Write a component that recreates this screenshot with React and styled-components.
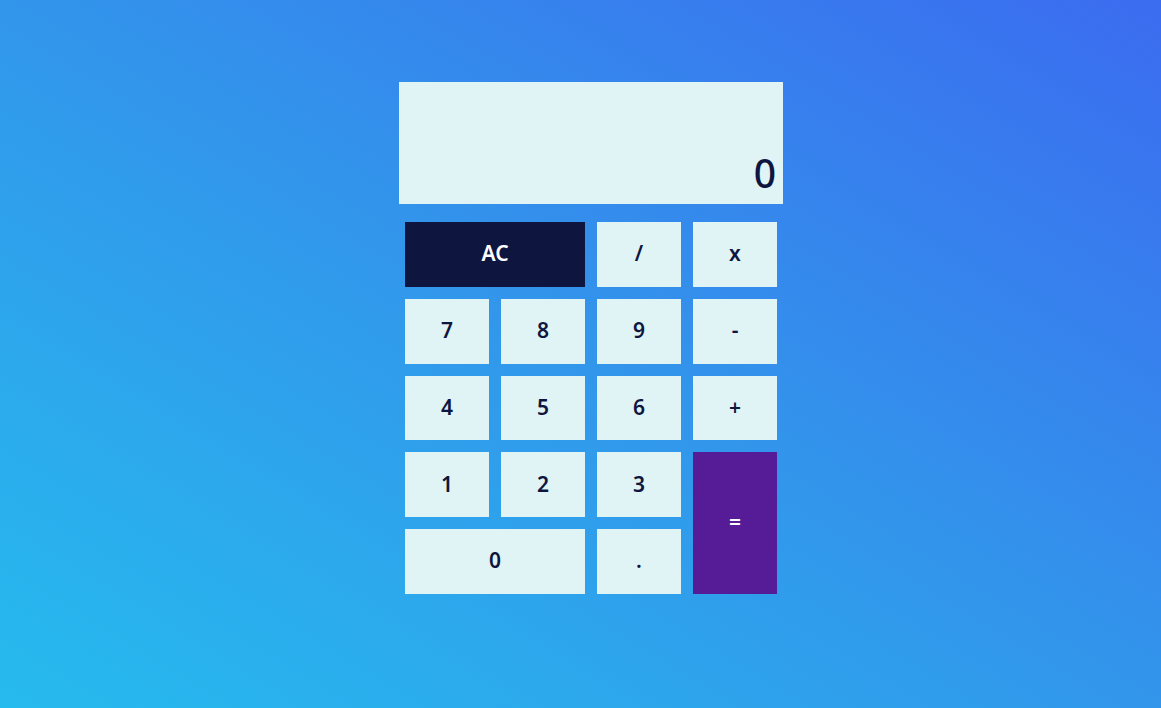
import React, { useState } from 'react';
import styled, { createGlobalStyle } from 'styled-components';

const GlobalStyle = createGlobalStyle`
  html, body {
    margin: 0;
    padding: 0;
    height: 100%;
  }

  body {
    font-family: 'Noto Sans', 'DejaVu Sans', sans-serif;
  }
`;

const Page = styled.div`
  min-height: 100vh;
  box-sizing: border-box;
  padding: 82px 0 0 21px;
  display: flex;
  justify-content: center;
  align-items: flex-start;
  background: linear-gradient(to top right, #26bbee 0%, #3296eb 50%, #3b6cf0 100%);
`;

const Calculator = styled.div`
  width: 384px;
  display: flex;
  flex-direction: column;
  gap: 12px;
`;

const Display = styled.div`
  height: 122px;
  box-sizing: border-box;
  background: #e0f3f5;
  color: #0e1640;
  padding: 0 7px 12px;
  display: flex;
  align-items: flex-end;
  justify-content: flex-end;
  font-size: 39px;
  font-weight: 500;
  line-height: 1;
`;

const Keypad = styled.div`
  display: grid;
  grid-template-columns: repeat(4, 84px);
  grid-auto-rows: 64.75px;
  gap: 12px;
  padding: 6px;
`;

const Key = styled.button`
  border: none;
  border-radius: 0;
  margin: 0;
  padding: 0 0 2px;
  cursor: pointer;
  font-family: 'Noto Sans', 'DejaVu Sans', sans-serif;
  font-size: 21px;
  font-weight: 600;
  background: ${({ $variant }) =>
    $variant === 'clear' ? '#0e1640' : $variant === 'equals' ? '#561c98' : '#e0f3f5'};
  color: ${({ $variant }) => ($variant ? '#ffffff' : '#0e1640')};
  grid-column: span ${({ $cols }) => $cols || 1};
  grid-row: span ${({ $rows }) => $rows || 1};

  &:hover {
    filter: brightness(0.97);
  }
`;

const keys = [
  { label: 'AC', variant: 'clear', cols: 2 },
  { label: '/' },
  { label: 'x' },
  { label: '7' },
  { label: '8' },
  { label: '9' },
  { label: '-' },
  { label: '4' },
  { label: '5' },
  { label: '6' },
  { label: '+' },
  { label: '1' },
  { label: '2' },
  { label: '3' },
  { label: '=', variant: 'equals', rows: 2 },
  { label: '0', cols: 2 },
  { label: '.' },
];

const App = () => {
  const [value, setValue] = useState('0');

  const handleKey = (label) => {
    if (label === 'AC') {
      setValue('0');
      return;
    }
    if (label === '=') {
      try {
        // eslint-disable-next-line no-new-func
        const result = Function(`return (${value.replace(/x/g, '*')})`)();
        setValue(String(result));
      } catch (e) {
        setValue('0');
      }
      return;
    }
    setValue(prev => (prev === '0' && label !== '.' ? label : prev + label));
  };

  return (
    <>
      <GlobalStyle />
      <Page>
        <Calculator>
          <Display>{value}</Display>
          <Keypad>
            {keys.map(k => (
              <Key
                key={k.label}
                $variant={k.variant}
                $cols={k.cols}
                $rows={k.rows}
                onClick={() => handleKey(k.label)}
              >
                {k.label}
              </Key>
            ))}
          </Keypad>
        </Calculator>
      </Page>
    </>
  );
};

export default App;
